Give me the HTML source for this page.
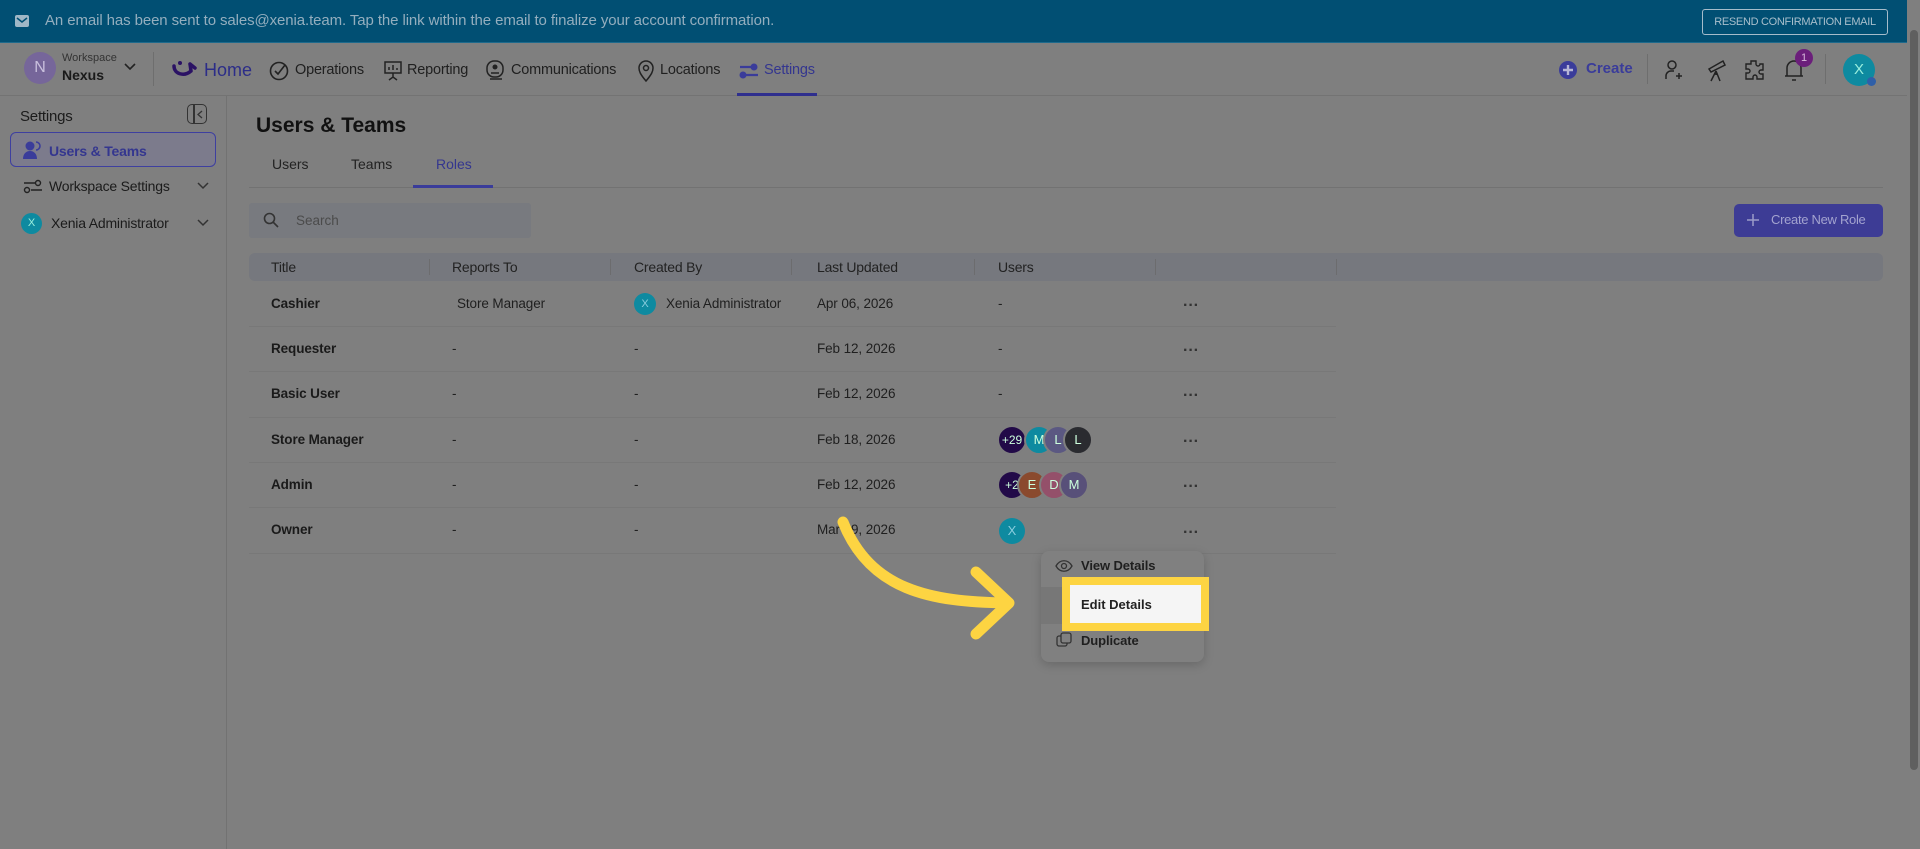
<!DOCTYPE html>
<html><head><meta charset="utf-8"><style>
*{box-sizing:border-box;margin:0;padding:0}
body{width:1920px;height:849px;overflow:hidden;background:#7f7f7f;font-family:"Liberation Sans",sans-serif;color:#161616;position:relative}
.a{position:absolute;white-space:nowrap}
.banner{left:0;top:0;width:1920px;height:43px;background:#014f73;border-bottom:1px solid #1e6a8c}
.btxt{left:45px;top:12px;font-size:15px;color:#94aebe;letter-spacing:-.1px}
.rbtn{left:1702px;top:9px;width:186px;height:26px;border:1px solid #a6bccb;border-radius:3px;color:#a9bfcc;font-size:11px;text-align:center;line-height:24px;letter-spacing:-.3px}
.nav{left:0;top:44px;width:1907px;height:52px;border-bottom:1px solid #737373}
.nt{font-size:14.5px;color:#202020;top:62px;letter-spacing:-.2px}
.side{left:226px;top:96px;width:1px;height:753px;background:#727272}
.si{font-size:14px;color:#1b1b1b;letter-spacing:-.2px}
.th{font-size:14px;color:#222;top:259px;letter-spacing:-.2px}
.td{font-size:13.5px;color:#1f1f1f;letter-spacing:-.1px}
.tb{font-weight:bold;color:#1a1a1a}
.sep{height:1px;background:#787878;left:249px;width:1087px}
.cdiv{width:1px;height:16px;background:#6c6c6e;top:259px}
.dots{font-size:16px;font-weight:bold;color:#333;letter-spacing:0}
.av{width:26px;height:26px;border-radius:50%;color:#cfd;font-size:13px;text-align:center;line-height:26px;border:2px solid #7f7f7f;box-sizing:content-box}
</style></head><body>
<div class="a banner"></div>
<svg class="a" style="left:15px;top:15px" width="14" height="12"><rect x="0" y="0" width="14" height="12" rx="2" fill="#9fb7c6"/><path d="M2 3l5 4 5-4" stroke="#014f73" stroke-width="1.5" fill="none"/></svg>
<div class="a btxt">An email has been sent to sales@xenia.team. Tap the link within the email to finalize your account confirmation.</div>
<div class="a rbtn">RESEND CONFIRMATION EMAIL</div>

<div class="a nav"></div>
<div class="a" style="left:24px;top:52px;width:32px;height:32px;border-radius:50%;background:#76669a;color:#c9c0dd;font-size:16px;text-align:center;line-height:32px">N</div>
<div class="a" style="left:62px;top:52px;font-size:11px;color:#333">Workspace</div>
<div class="a" style="left:62px;top:67px;font-size:14px;font-weight:bold;color:#1a1a1a">Nexus</div>
<svg class="a" style="left:124px;top:63px" width="12" height="8"><path d="M1 1l5 5 5-5" stroke="#222" stroke-width="1.6" fill="none"/></svg>
<div class="a" style="left:153px;top:52px;width:1px;height:34px;background:#6e6e6e"></div>
<svg class="a" style="left:171px;top:60px" width="30" height="20"><path d="M3 6c0 8 10 11 17 5M20 11l-1-7M19 4l5 4" stroke="#2b1264" stroke-width="3.5" fill="none" stroke-linecap="round"/><circle cx="9" cy="3" r="2" fill="#2b1264"/></svg>
<div class="a" style="left:204px;top:60px;font-size:18px;color:#2c2d88">Home</div>
<svg class="a" style="left:269px;top:60px" width="20" height="22"><circle cx="10" cy="11" r="8.5" stroke="#222" stroke-width="1.6" fill="none"/><path d="M6 11l3 3 7-9" stroke="#222" stroke-width="1.6" fill="none"/></svg>
<div class="a nt" style="left:295px">Operations</div>
<svg class="a" style="left:383px;top:60px" width="20" height="22"><rect x="2" y="2" width="16" height="11" stroke="#222" stroke-width="1.5" fill="none"/><path d="M6 10V7M10 10V5M14 10V8M10 13v4M6 20l4-3 4 3" stroke="#222" stroke-width="1.5" fill="none"/></svg>
<div class="a nt" style="left:407px">Reporting</div>
<svg class="a" style="left:485px;top:59px" width="22" height="24"><rect x="2" y="2" width="16" height="16" rx="7" stroke="#222" stroke-width="1.5" fill="none"/><circle cx="10" cy="8" r="2.5" fill="#222"/><path d="M6 14h8M5 20h12" stroke="#222" stroke-width="1.5"/></svg>
<div class="a nt" style="left:511px">Communications</div>
<svg class="a" style="left:637px;top:59px" width="18" height="24"><path d="M9 22C3 15 2 12 2 9a7 7 0 0114 0c0 3-1 6-7 13z" stroke="#222" stroke-width="1.5" fill="none"/><circle cx="9" cy="9" r="2.5" stroke="#222" stroke-width="1.5" fill="none"/></svg>
<div class="a nt" style="left:660px">Locations</div>
<svg class="a" style="left:738px;top:61px" width="22" height="20"><path d="M2 6h14M6 14h14" stroke="#3a3c9a" stroke-width="2.2"/><circle cx="16" cy="6" r="3.5" fill="#3a3c9a"/><circle cx="5" cy="14" r="3.5" fill="#3a3c9a"/></svg>
<div class="a nt" style="left:764px;color:#34368f">Settings</div>
<div class="a" style="left:737px;top:93px;width:80px;height:3px;background:#2f2f8e"></div>

<svg class="a" style="left:1558px;top:60px" width="20" height="20"><circle cx="10" cy="10" r="9" fill="#3a3c9a"/><path d="M10 5v10M5 10h10" stroke="#b6b6d6" stroke-width="2.4"/></svg>
<div class="a" style="left:1586px;top:60px;font-size:15px;font-weight:bold;color:#3a3c9a">Create</div>
<div class="a" style="left:1647px;top:54px;width:1px;height:30px;background:#6e6e6e"></div>
<svg class="a" style="left:1663px;top:58px" width="22" height="24"><circle cx="9" cy="7" r="4" stroke="#222" stroke-width="1.5" fill="none"/><path d="M3 21v-3a5 5 0 015-5h3M16 15v6M13 18h6" stroke="#222" stroke-width="1.5" fill="none"/></svg>
<svg class="a" style="left:1705px;top:57px" width="22" height="26"><path d="M4 12l14-8 2 4-14 7zM11 14l-5 10M11 14l4 10M11 14v4" stroke="#222" stroke-width="1.5" fill="none"/></svg>
<svg class="a" style="left:1743px;top:58px" width="22" height="24"><path d="M8 3h5v3a2 2 0 004 0h3v6h-2a2 2 0 000 4h2v5h-6v-2a2 2 0 00-4 0v2H3v-6h2a2 2 0 000-4H3V6h5z" stroke="#222" stroke-width="1.4" fill="none"/></svg>
<svg class="a" style="left:1782px;top:56px" width="24" height="28"><path d="M5 20V12a7 7 0 0114 0v8zM3 20h18M10 24h4" stroke="#222" stroke-width="1.5" fill="none"/></svg>
<div class="a" style="left:1795px;top:49px;width:18px;height:18px;border-radius:50%;background:#6b1e7b;color:#d8b8dc;font-size:11px;text-align:center;line-height:18px">1</div>
<div class="a" style="left:1825px;top:54px;width:1px;height:30px;background:#6e6e6e"></div>
<div class="a" style="left:1843px;top:54px;width:32px;height:32px;border-radius:50%;background:#0e8aa0;color:#9ed;font-size:15px;text-align:center;line-height:32px">X</div>
<div class="a" style="left:1867px;top:77px;width:9px;height:9px;border-radius:50%;background:#2f5fa8"></div>

<div class="a side"></div>
<div class="a si" style="left:20px;top:108px;font-size:15px">Settings</div>
<div class="a" style="left:187px;top:104px;width:20px;height:20px;border:1.5px solid #333;border-radius:5px"></div>
<div class="a" style="left:193px;top:105px;width:1.5px;height:18px;background:#333"></div>
<svg class="a" style="left:197px;top:110px" width="6" height="9"><path d="M5 1L1 4.5 5 8" stroke="#333" stroke-width="1.3" fill="none"/></svg>
<div class="a" style="left:10px;top:132px;width:206px;height:35px;border:1.5px solid #3e3fa0;border-radius:6px;background:#7c7b8c"></div>
<svg class="a" style="left:22px;top:140px" width="20" height="20"><circle cx="8" cy="6" r="4.5" fill="#3a3c9a"/><path d="M1 19c0-5 3-8 7-8s7 3 7 8z" fill="#3a3c9a"/><path d="M14 2a4 4 0 010 8" stroke="#3a3c9a" stroke-width="1.6" fill="none"/></svg>
<div class="a si" style="left:49px;top:143px;color:#34368f;font-weight:bold">Users &amp; Teams</div>
<svg class="a" style="left:23px;top:177px" width="20" height="18"><path d="M1 6h11M8 13h11" stroke="#222" stroke-width="1.4"/><circle cx="15" cy="6" r="2.5" stroke="#222" stroke-width="1.4" fill="none"/><circle cx="4" cy="13" r="2.5" stroke="#222" stroke-width="1.4" fill="none"/></svg>
<div class="a si" style="left:49px;top:178px">Workspace Settings</div>
<svg class="a" style="left:197px;top:182px" width="12" height="8"><path d="M1 1l5 5 5-5" stroke="#333" stroke-width="1.5" fill="none"/></svg>
<div class="a" style="left:21px;top:213px;width:21px;height:21px;border-radius:50%;background:#0e8aa0;color:#9ed;font-size:11px;text-align:center;line-height:21px">X</div>
<div class="a si" style="left:51px;top:215px">Xenia Administrator</div>
<svg class="a" style="left:197px;top:219px" width="12" height="8"><path d="M1 1l5 5 5-5" stroke="#333" stroke-width="1.5" fill="none"/></svg>

<div class="a" style="left:256px;top:114px;font-size:21px;font-weight:bold;color:#111">Users &amp; Teams</div>
<div class="a" style="left:272px;top:156px;font-size:14px;color:#222">Users</div>
<div class="a" style="left:351px;top:156px;font-size:14px;color:#222">Teams</div>
<div class="a" style="left:436px;top:156px;font-size:14px;color:#34368f">Roles</div>
<div class="a" style="left:249px;top:187px;width:1634px;height:1px;background:#727272"></div>
<div class="a" style="left:413px;top:185px;width:80px;height:3px;background:#3a3c9a"></div>

<div class="a" style="left:249px;top:203px;width:282px;height:35px;background:#787a7f;border-radius:3px"></div>
<svg class="a" style="left:263px;top:212px" width="16" height="17"><circle cx="6.5" cy="6.5" r="5" stroke="#333" stroke-width="1.6" fill="none"/><path d="M10 10l5 5" stroke="#333" stroke-width="1.6"/></svg>
<div class="a" style="left:296px;top:213px;font-size:13.5px;color:#4b4b4b">Search</div>

<div class="a" style="left:1734px;top:204px;width:149px;height:33px;background:#3d3c95;border-radius:5px"></div>
<svg class="a" style="left:1747px;top:214px" width="12" height="12"><path d="M6 0v12M0 6h12" stroke="#9b9bc9" stroke-width="1.5"/></svg>
<div class="a" style="left:1771px;top:212px;font-size:13px;color:#a3a3cf;letter-spacing:-.3px">Create New Role</div>

<div class="a" style="left:249px;top:253px;width:1634px;height:28px;background:#76787e;border-radius:6px"></div>
<div class="a th" style="left:271px">Title</div>
<div class="a th" style="left:452px">Reports To</div>
<div class="a th" style="left:634px">Created By</div>
<div class="a th" style="left:817px">Last Updated</div>
<div class="a th" style="left:998px">Users</div>
<div class="a cdiv" style="left:429px"></div><div class="a cdiv" style="left:610px"></div><div class="a cdiv" style="left:791px"></div><div class="a cdiv" style="left:974px"></div><div class="a cdiv" style="left:1155px"></div><div class="a cdiv" style="left:1336px"></div>

<div class="a sep" style="top:326px"></div><div class="a sep" style="top:371px"></div><div class="a sep" style="top:417px"></div><div class="a sep" style="top:462px"></div><div class="a sep" style="top:507px"></div><div class="a sep" style="top:553px"></div>

<div class="a td tb" style="left:271px;top:296px">Cashier</div>
<div class="a td" style="left:457px;top:296px">Store Manager</div>
<div class="a" style="left:634px;top:293px;width:22px;height:22px;border-radius:50%;background:#0e8aa0;color:#8cd;font-size:11px;text-align:center;line-height:22px">X</div>
<div class="a td" style="left:666px;top:296px">Xenia Administrator</div>
<div class="a td" style="left:817px;top:296px">Apr 06, 2026</div>
<div class="a td" style="left:998px;top:296px">-</div>

<div class="a td tb" style="left:271px;top:341px">Requester</div>
<div class="a td" style="left:452px;top:341px">-</div><div class="a td" style="left:634px;top:341px">-</div>
<div class="a td" style="left:817px;top:341px">Feb 12, 2026</div><div class="a td" style="left:998px;top:341px">-</div>

<div class="a td tb" style="left:271px;top:386px">Basic User</div>
<div class="a td" style="left:452px;top:386px">-</div><div class="a td" style="left:634px;top:386px">-</div>
<div class="a td" style="left:817px;top:386px">Feb 12, 2026</div><div class="a td" style="left:998px;top:386px">-</div>

<div class="a td tb" style="left:271px;top:432px">Store Manager</div>
<div class="a td" style="left:452px;top:432px">-</div><div class="a td" style="left:634px;top:432px">-</div>
<div class="a td" style="left:817px;top:432px">Feb 18, 2026</div>
<div class="a av" style="left:997px;top:425px;background:#220a48;font-size:12px">+29</div>
<div class="a av" style="left:1024px;top:425px;background:#0e8aa0">M</div>
<div class="a av" style="left:1043px;top:425px;background:#5b5882">L</div>
<div class="a av" style="left:1063px;top:425px;background:#2a2b30">L</div>

<div class="a td tb" style="left:271px;top:477px">Admin</div>
<div class="a td" style="left:452px;top:477px">-</div><div class="a td" style="left:634px;top:477px">-</div>
<div class="a td" style="left:817px;top:477px">Feb 12, 2026</div>
<div class="a av" style="left:997px;top:470px;background:#220a48;font-size:12px">+2</div>
<div class="a av" style="left:1017px;top:470px;background:#8a4a2e">E</div>
<div class="a av" style="left:1039px;top:470px;background:#94506a">D</div>
<div class="a av" style="left:1059px;top:470px;background:#585079">M</div>

<div class="a td tb" style="left:271px;top:522px">Owner</div>
<div class="a td" style="left:452px;top:522px">-</div><div class="a td" style="left:634px;top:522px">-</div>
<div class="a td" style="left:817px;top:522px">Mar 09, 2026</div>
<div class="a" style="left:999px;top:518px;width:26px;height:26px;border-radius:50%;background:#0e8aa0;color:#8cd;font-size:13px;text-align:center;line-height:26px">X</div>

<div class="a dots" style="left:1183px;top:297px">···</div>
<div class="a dots" style="left:1183px;top:342px">···</div>
<div class="a dots" style="left:1183px;top:387px">···</div>
<div class="a dots" style="left:1183px;top:433px">···</div>
<div class="a dots" style="left:1183px;top:478px">···</div>
<div class="a dots" style="left:1183px;top:524px">···</div>

<div class="a" style="left:1041px;top:551px;width:163px;height:111px;background:#808080;border-radius:8px;box-shadow:0 3px 10px rgba(0,0,0,.18)"></div>
<svg class="a" style="left:1055px;top:559px" width="18" height="14"><path d="M1 7c4-7 12-7 16 0-4 7-12 7-16 0z" stroke="#333" stroke-width="1.3" fill="none"/><circle cx="9" cy="7" r="2.5" stroke="#333" stroke-width="1.3" fill="none"/></svg>
<div class="a td" style="left:1081px;top:558px;font-weight:bold;font-size:13px">View Details</div>
<div class="a" style="left:1041px;top:587px;width:163px;height:37px;background:#777"></div>
<svg class="a" style="left:1056px;top:632px" width="16" height="16"><rect x="1" y="4" width="10" height="10" rx="2" stroke="#333" stroke-width="1.3" fill="none"/><rect x="5" y="1" width="10" height="10" rx="2" stroke="#333" stroke-width="1.3" fill="#808080"/></svg>
<div class="a td" style="left:1081px;top:633px;font-weight:bold;font-size:13px">Duplicate</div>
<div class="a" style="left:1062px;top:577px;width:147px;height:54px;border:8px solid #fdd442;background:#f5f5f5"></div>
<div class="a" style="left:1081px;top:597px;font-size:13px;font-weight:bold;color:#222">Edit Details</div>

<svg class="a" style="left:0;top:0" width="1920" height="849"><path d="M843 522C870 590 930 602 1007 603" stroke="#fdd442" stroke-width="11" fill="none" stroke-linecap="round"/><path d="M976 572l33 31-33 31" stroke="#fdd442" stroke-width="11" fill="none" stroke-linecap="round" stroke-linejoin="round"/></svg>

<div class="a" style="left:1907px;top:0;width:13px;height:849px;background:#7f7f7f"></div>
<div class="a" style="left:1910px;top:30px;width:8px;height:740px;background:#5f5f5f;border-radius:4px"></div>
</body></html>
